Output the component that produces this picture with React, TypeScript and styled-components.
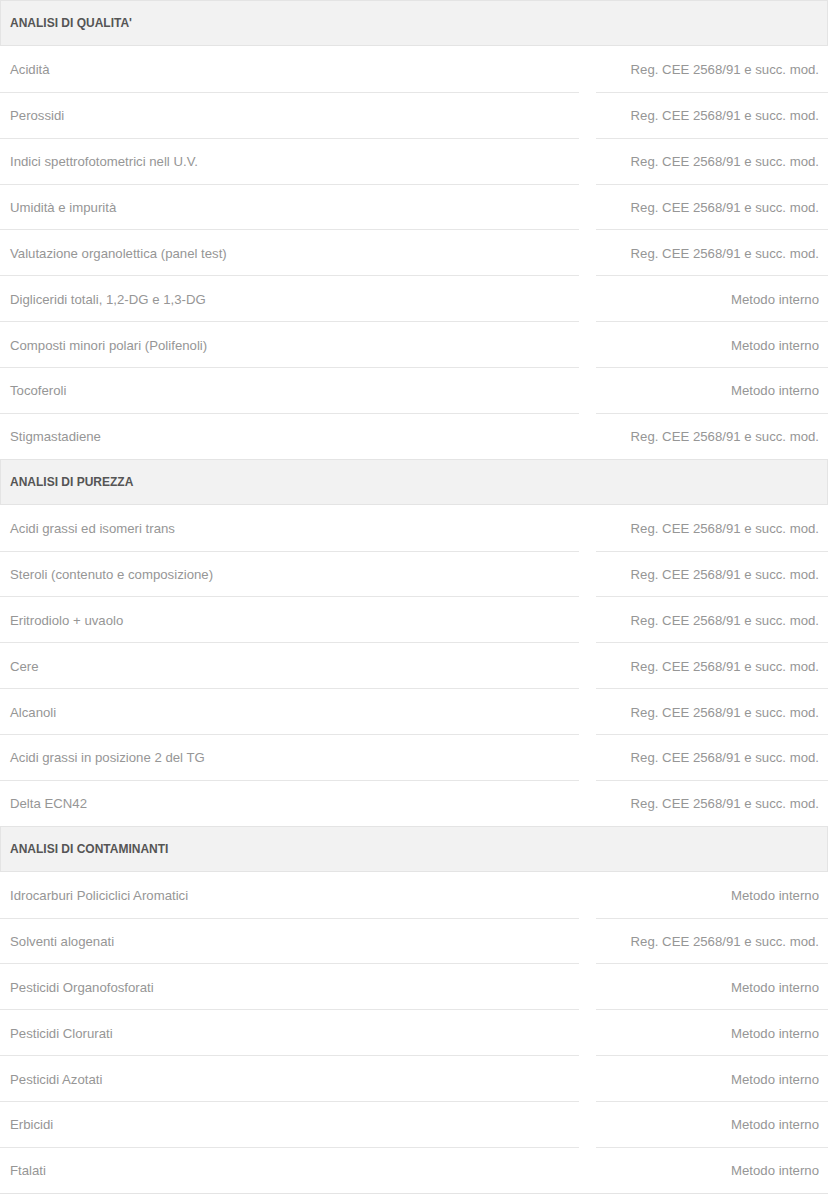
import React from "react";
import styled, { createGlobalStyle } from "styled-components";

const GlobalStyle = createGlobalStyle`
  html, body {
    margin: 0;
    padding: 0;
    background: #ffffff;
  }
  body {
    font-family: "Liberation Sans", Arial, Helvetica, sans-serif;
  }
`;

type Row = [string, string];
type Group = { title: string; rows: Row[] };

const REG = "Reg. CEE 2568/91 e succ. mod.";
const INT = "Metodo interno";

const groups: Group[] = [
  {
    title: "ANALISI DI QUALITA'",
    rows: [
      ["Acidità", REG],
      ["Perossidi", REG],
      ["Indici spettrofotometrici nell U.V.", REG],
      ["Umidità e impurità", REG],
      ["Valutazione organolettica (panel test)", REG],
      ["Digliceridi totali, 1,2-DG e 1,3-DG", INT],
      ["Composti minori polari (Polifenoli)", INT],
      ["Tocoferoli", INT],
      ["Stigmastadiene", REG],
    ],
  },
  {
    title: "ANALISI DI PUREZZA",
    rows: [
      ["Acidi grassi ed isomeri trans", REG],
      ["Steroli (contenuto e composizione)", REG],
      ["Eritrodiolo + uvaolo", REG],
      ["Cere", REG],
      ["Alcanoli", REG],
      ["Acidi grassi in posizione 2 del TG", REG],
      ["Delta ECN42", REG],
    ],
  },
  {
    title: "ANALISI DI CONTAMINANTI",
    rows: [
      ["Idrocarburi Policiclici Aromatici", INT],
      ["Solventi alogenati", REG],
      ["Pesticidi Organofosforati", INT],
      ["Pesticidi Clorurati", INT],
      ["Pesticidi Azotati", INT],
      ["Erbicidi", INT],
      ["Ftalati", INT],
    ],
  },
];

const ROW_H = "45.875px";

const Table = styled.div`
  width: 828px;
  display: grid;
  grid-template-columns: 579px 1fr;
  column-gap: 17px;
  border-bottom: 1px solid #e4e4e4;
`;

const Header = styled.div`
  grid-column: 1 / -1;
  box-sizing: border-box;
  height: ${ROW_H};
  display: flex;
  align-items: center;
  padding: 0 9px;
  background: #f2f2f2;
  border: 1px solid #e4e4e4;
  font-size: 12px;
  font-weight: bold;
  color: #555555;
`;

const Cell = styled.div<{ $first: boolean; $right?: boolean }>`
  box-sizing: border-box;
  height: ${ROW_H};
  display: flex;
  align-items: center;
  justify-content: ${(p) => (p.$right ? "flex-end" : "flex-start")};
  padding: ${(p) => (p.$right ? "1px 9px 0 0" : "1px 0 0 10px")};
  border-top: ${(p) => (p.$first ? "none" : "1px solid #e6e6e6")};
  font-size: 13.2px;
  color: #969696;
  white-space: nowrap;
`;

export default function App() {
  return (
    <>
      <GlobalStyle />
      <Table>
        {groups.map((g) => (
          <React.Fragment key={g.title}>
            <Header>{g.title}</Header>
            {g.rows.map(([name, method], i) => (
              <React.Fragment key={name}>
                <Cell $first={i === 0}>{name}</Cell>
                <Cell $first={i === 0} $right>
                  {method}
                </Cell>
              </React.Fragment>
            ))}
          </React.Fragment>
        ))}
      </Table>
    </>
  );
}
